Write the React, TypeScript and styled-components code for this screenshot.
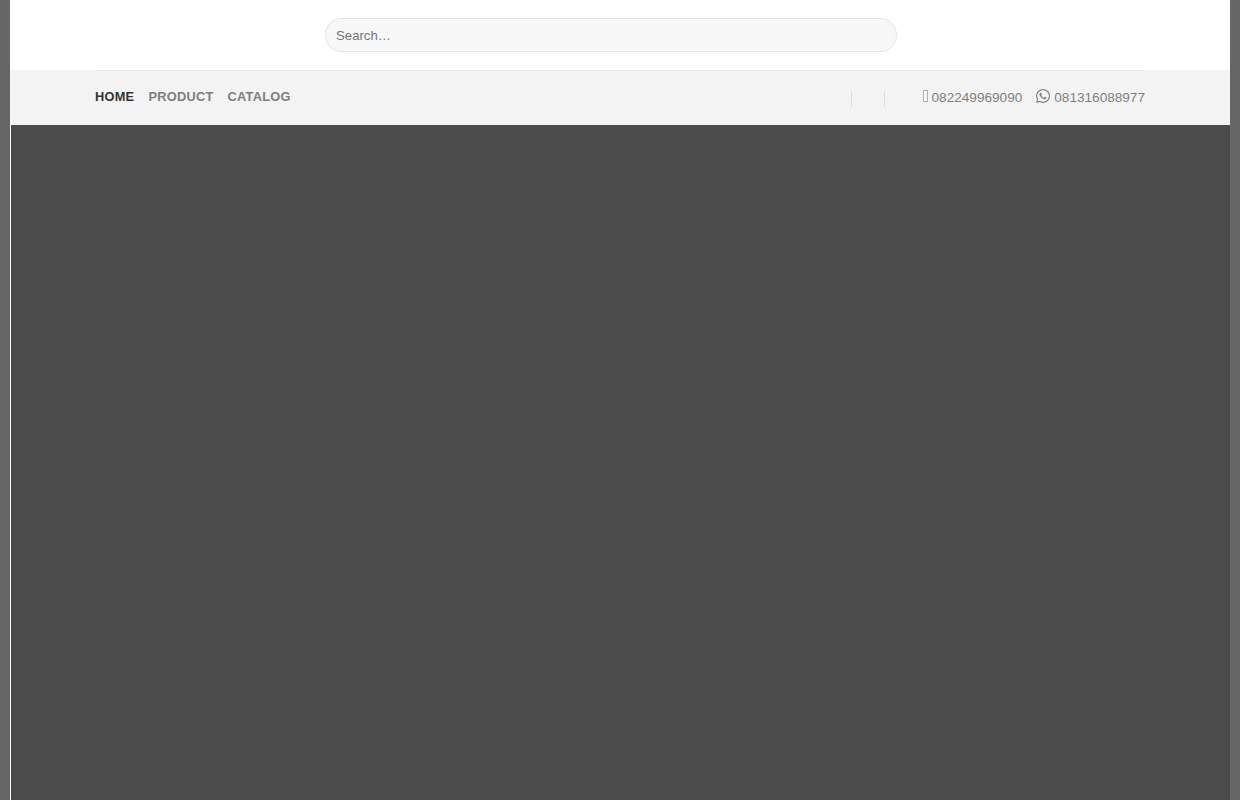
import React from "react";
import styled, { createGlobalStyle } from "styled-components";
import { FaWhatsapp } from "react-icons/fa";

const Global = createGlobalStyle`
  html, body { margin: 0; padding: 0; height: 100%; overflow: hidden; background: #666666; }
  #root { height: 100%; }
  * { box-sizing: border-box; }
  input::placeholder { color: #757575; opacity: 1; }
`;

const Page = styled.div`
  height: 800px;
  margin: 0 10px;
  display: flex;
  flex-direction: column;
  background: #ffffff;
  font-family: "Liberation Sans", Arial, sans-serif;
`;

const Masthead = styled.header`
  height: 70px;
  flex: none;
  background: #ffffff;
  display: flex;
  justify-content: flex-start;
  padding: 18px 0 0 315px;
`;

const SearchInput = styled.input`
  width: 572px;
  height: 34px;
  border: 1px solid rgba(0, 0, 0, 0.08);
  border-radius: 99px;
  background: rgba(0, 0, 0, 0.03);
  padding: 0 10px;
  font: 13.2px "Liberation Sans", Arial, sans-serif;
  color: #333333;
  outline: none;
`;

const NavBar = styled.nav`
  height: 55px;
  flex: none;
  background: #f3f3f3;
  padding: 0 85px;
`;

const NavInner = styled.div`
  height: 55px;
  border-top: 1px solid #e9e9e9;
  display: flex;
  align-items: center;
  justify-content: space-between;
`;

const NavLinks = styled.div`
  display: flex;
  gap: 14px;
  margin-top: -4px;
`;

const NavLink = styled.a<{ $active?: boolean }>`
  font-size: 12.8px;
  font-weight: 700;
  letter-spacing: 0.02em;
  text-transform: uppercase;
  color: ${(p) => (p.$active ? "#333333" : "#7d7d7d")};
`;

const Contacts = styled.div`
  display: flex;
  align-items: center;
  font-size: 13.6px;
  color: #808080;
  margin-top: -2px;
`;

const Dividers = styled.div`
  display: flex;
  gap: 32px;
  margin-top: 3px;
  margin-right: 38px;
`;

const Divider = styled.span`
  width: 1px;
  height: 16px;
  background: #dddddd;
`;

const Phones = styled.div`
  display: flex;
  gap: 14px;
`;

const Contact = styled.span`
  display: flex;
  align-items: center;
  gap: 4px;
`;

const MissingGlyph = styled.span`
  width: 5px;
  height: 12px;
  margin-top: -2px;
  border: 1px solid #b0b0b0;
`;

const WhatsappIcon = styled(FaWhatsapp)`
  width: 14px;
  height: 16px;
  margin-top: -2px;
`;

const Hero = styled.main`
  flex: 1;
  margin-left: 1px;
  background: #4b4b4b;
`;

export default function App() {
  return (
    <>
      <Global />
      <Page>
        <Masthead>
          <SearchInput type="search" placeholder="Search…" />
        </Masthead>
        <NavBar>
          <NavInner>
            <NavLinks>
              <NavLink $active>Home</NavLink>
              <NavLink>Product</NavLink>
              <NavLink>Catalog</NavLink>
            </NavLinks>
            <Contacts>
              <Dividers>
                <Divider />
                <Divider />
              </Dividers>
              <Phones>
                <Contact>
                  <MissingGlyph />
                  082249969090
                </Contact>
                <Contact>
                  <WhatsappIcon />
                  081316088977
                </Contact>
              </Phones>
            </Contacts>
          </NavInner>
        </NavBar>
        <Hero />
      </Page>
    </>
  );
}
